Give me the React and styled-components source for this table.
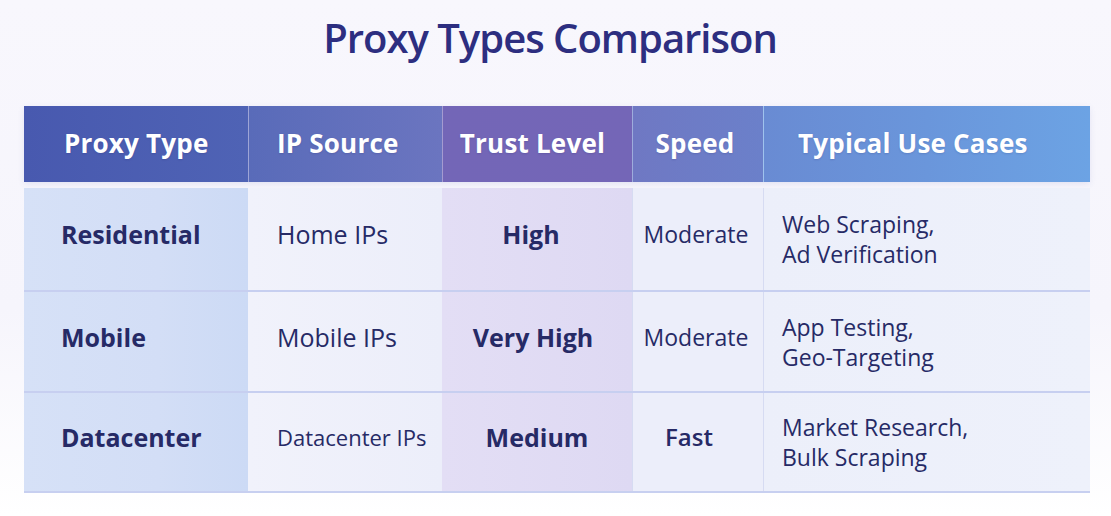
import React from "react";
import styled, { createGlobalStyle } from "styled-components";

const Global = createGlobalStyle`
  html, body { margin: 0; padding: 0; }
  body {
    background: linear-gradient(180deg, #f8f7fd 0%, #f6f5fc 60%, #ffffff 100%);
    font-family: "Open Sans", "Noto Sans", sans-serif;
  }
`;

const Page = styled.div`
  width: 1111px;
  height: 516px;
  box-sizing: border-box;
  padding: 12px 21px 0 24px;
  display: flex;
  flex-direction: column;
`;

const Title = styled.h1`
  margin: 0 0 44px;
  padding-right: 14px;
  height: 50px;
  text-align: center;
  font-size: 40px;
  font-weight: 600;
  letter-spacing: -1px;
  color: #2d2e80;
  line-height: 52px;
`;

const COLS = "224px 194px 190px 131px 327px";

const HeaderRow = styled.div`
  display: grid;
  grid-template-columns: ${COLS};
  height: 76px;
  box-shadow: 0 2px 6px rgba(80, 90, 170, 0.12);
`;

const headerTones = {
  type: "linear-gradient(90deg, #4859af 0%, #4f63b5 100%)",
  source: "linear-gradient(90deg, #596bb9 0%, #6b75c0 100%)",
  trust: "linear-gradient(90deg, #7366b7 0%, #7466b7 100%)",
  speed: "linear-gradient(90deg, #6f78c3 0%, #6b80ca 100%)",
  uses: "linear-gradient(90deg, #698bd3 0%, #6a96db 50%, #6ca3e4 100%)",
};

const HeaderCell = styled.div`
  display: flex;
  align-items: center;
  justify-content: ${(p) => (p.$center ? "center" : "flex-start")};
  padding-left: ${(p) => (p.$center ? 0 : p.$pad)}px;
  padding-right: ${(p) => p.$right || 0}px;
  padding-bottom: 2px;
  background: ${(p) => headerTones[p.$tone]};
  color: #ffffff;
  font-size: 26px;
  font-weight: 700;
  letter-spacing: 0.2px;
  border-left: ${(p) => (p.$first ? "none" : "1px solid rgba(255,255,255,0.35)")};
  text-shadow: 0 1px 2px rgba(30, 30, 90, 0.15);
`;

const Body = styled.div`
  margin-top: 6px;
  display: flex;
  flex-direction: column;
`;

const Row = styled.div`
  display: grid;
  grid-template-columns: ${COLS};
  height: ${(p) => p.$h}px;
  border-bottom: 2px solid #c7cff0;
`;

const tones = {
  type: "linear-gradient(90deg, #d6e1f7 0%, #d3def6 60%, #ccdaf5 100%)",
  source: "linear-gradient(90deg, #f1f2fb 0%, #eceefa 100%)",
  trust: "linear-gradient(90deg, #e3def5 0%, #ded9f3 100%)",
  speed: "#eceefa",
  uses: "linear-gradient(90deg, #eceffa 0%, #eef1fb 100%)",
};

const Cell = styled.div`
  display: flex;
  flex-direction: column;
  justify-content: center;
  align-items: ${(p) => (p.$center ? "center" : "flex-start")};
  padding-left: ${(p) => (p.$center ? 0 : p.$pad)}px;
  padding-right: ${(p) => p.$right || 0}px;
  padding-bottom: ${(p) => (p.$multi ? 0 : 10)}px;
  background: ${(p) => tones[p.$tone]};
  border-left: ${(p) => (p.$divider ? "1px solid #d6dbf2" : "none")};
  color: #262a66;
  font-size: ${(p) => p.$size || 25}px;
  font-weight: ${(p) => p.$weight || 400};
  line-height: 30px;
`;

const headers = [
  { tone: "type", label: "Proxy Type", pad: 40 },
  { tone: "source", label: "IP Source", pad: 28 },
  { tone: "trust", label: "Trust Level", center: true, right: 10 },
  { tone: "speed", label: "Speed", center: true, right: 6 },
  { tone: "uses", label: "Typical Use Cases", pad: 34 },
];

const rows = [
  {
    h: 102,
    type: "Residential",
    source: "Home IPs",
    trust: "High",
    trustRight: 12,
    speed: "Moderate",
    uses: ["Web Scraping,", "Ad Verification"],
  },
  {
    h: 99,
    type: "Mobile",
    source: "Mobile IPs",
    trust: "Very High",
    trustRight: 8,
    speed: "Moderate",
    uses: ["App Testing,", "Geo-Targeting"],
  },
  {
    h: 98,
    type: "Datacenter",
    source: "Datacenter IPs",
    sourceSize: 22,
    trust: "Medium",
    trustRight: 0,
    speed: "Fast",
    speedWeight: 600,
    speedSize: 24,
    speedRight: 18,
    uses: ["Market Research,", "Bulk Scraping"],
  },
];

export default function App() {
  return (
    <>
      <Global />
      <Page>
        <Title>Proxy Types Comparison</Title>
        <HeaderRow>
          {headers.map((h, i) => (
            <HeaderCell
              key={h.label}
              $tone={h.tone}
              $first={i === 0}
              $center={h.center}
              $pad={h.pad}
              $right={h.right}
            >
              {h.label}
            </HeaderCell>
          ))}
        </HeaderRow>
        <Body>
          {rows.map((r) => (
            <Row key={r.type} $h={r.h}>
              <Cell $tone="type" $pad={37} $weight={700}>
                {r.type}
              </Cell>
              <Cell $tone="source" $pad={29} $size={r.sourceSize}>
                {r.source}
              </Cell>
              <Cell $tone="trust" $center $weight={700} $right={r.trustRight}>
                {r.trust}
              </Cell>
              <Cell
                $tone="speed"
                $center
                $divider
                $size={r.speedSize || 23}
                $weight={r.speedWeight}
                $right={r.speedRight || 4}
              >
                {r.speed}
              </Cell>
              <Cell $tone="uses" $pad={18} $multi $divider $size={23}>
                {r.uses.map((u) => (
                  <span key={u}>{u}</span>
                ))}
              </Cell>
            </Row>
          ))}
        </Body>
      </Page>
    </>
  );
}
